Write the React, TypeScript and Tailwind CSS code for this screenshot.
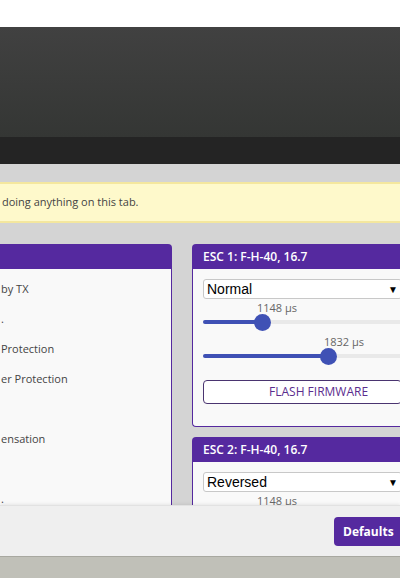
import React from "react";

const font = { fontFamily: '"Open Sans", "Liberation Sans", sans-serif' };

function Slider({ thumb, label, labelX }: { thumb: number; label: string; labelX: number }) {
  return (
    <div className="relative h-[34px]">
      <div
        className="absolute top-[0px] text-[11px] leading-[14px] text-[#666] whitespace-nowrap"
        style={{ left: labelX }}
      >
        {label}
      </div>
      <div className="absolute left-0 right-0 top-[19px] h-[4px] rounded-full bg-[#e9e9e9]" />
      <div className="absolute left-0 top-[19px] h-[4px] rounded-full bg-[#3f51b5]" style={{ width: thumb }} />
      <div
        className="absolute top-[13px] w-[17px] h-[17px] rounded-full bg-[#3f51b5]"
        style={{ left: thumb - 8 }}
      />
    </div>
  );
}

function Select({ value }: { value: string }) {
  return (
    <div
      className="h-[20px] border border-[#c8c8c8] rounded-[3px] bg-white flex items-center justify-between pl-[3px] pr-[3px] text-[14px] text-black"
      style={{ fontFamily: '"Liberation Sans", Arial, sans-serif' }}
    >
      <span>{value}</span>
      <span className="text-[10px]">▼</span>
    </div>
  );
}

export default function App() {
  const rows = ["by TX", ".", "Protection", "er Protection", "", "ensation", "", "."];
  return (
    <div className="w-[400px] h-[578px] overflow-hidden flex flex-col" style={font}>
      <div className="h-[27px] bg-white shrink-0" />
      <div className="h-[110px] shrink-0 bg-gradient-to-b from-[#414141] to-[#343634]" />
      <div className="h-[27px] shrink-0 bg-[#242424]" />
      <div className="h-[341px] shrink-0 overflow-hidden bg-[#d4d4d4] pt-[18px]">
        <div className="h-[41px] bg-[#fef9cb] border-y-2 border-[#f4e79e] flex items-center text-[11px] text-[#444] pl-[2px] whitespace-nowrap">
          doing anything on this tab.
        </div>
        <div className="flex gap-[20px] mt-[21px]">
          <div className="w-[172px] shrink-0 flex flex-col">
            <div className="h-[25px] bg-[#55299f] rounded-tr-[4px]" />
            <div className="h-[300px] bg-[#f9f9f9] border-r border-b border-[#55299f] pt-[5px] text-[11px] text-[#444]">
              {rows.map((r, i) => (
                <div key={i} className="h-[30px] flex items-center whitespace-nowrap pl-[1px]">
                  {r}
                </div>
              ))}
            </div>
          </div>
          <div className="w-[210px] shrink-0 flex flex-col gap-[10px]">
            <div className="flex flex-col">
              <div className="h-[25px] bg-[#55299f] rounded-tl-[4px] flex items-center pl-[11px] text-[12px] font-semibold text-white whitespace-nowrap">
                ESC 1: F-H-40, 16.7
              </div>
              <div className="h-[158px] bg-[#f9f9f9] border-l border-b border-[#55299f] rounded-bl-[4px] pl-[10px] pt-[10px]">
                <Select value="Normal" />
                <div className="mt-[2px]">
                  <Slider thumb={59} label="1148 μs" labelX={54} />
                </div>
                <Slider thumb={125} label="1832 μs" labelX={121} />
                <div className="mt-[11px] h-[24px] border border-[#4a3470] rounded-[4px] bg-white flex items-center text-[12px] text-[#5b2d8e] whitespace-nowrap">
                  <span className="ml-[65px]">FLASH FIRMWARE</span>
                </div>
              </div>
            </div>
            <div className="flex flex-col">
              <div className="h-[25px] bg-[#55299f] rounded-tl-[4px] flex items-center pl-[11px] text-[12px] font-semibold text-white whitespace-nowrap">
                ESC 2: F-H-40, 16.7
              </div>
              <div className="h-[158px] bg-[#f9f9f9] border-l border-b border-[#55299f] rounded-bl-[4px] pl-[10px] pt-[10px]">
                <Select value="Reversed" />
                <div className="mt-[2px]">
                  <Slider thumb={59} label="1148 μs" labelX={54} />
                </div>
              </div>
            </div>
          </div>
        </div>
      </div>
      <div className="h-[51px] shrink-0 bg-[#efefef] border-t border-[#e2e2e2] flex items-start justify-end pt-[11px] shadow-[0_-1px_3px_rgba(0,0,0,0.08)]">
        <div className="h-[29px] w-[70px] -mr-[4px] bg-[#55299f] rounded-l-[4px] flex items-center pl-[9px] text-[12px] font-bold text-white">
          Defaults
        </div>
      </div>
      <div className="flex-1 bg-[#c0c0b8] border-t border-[#a8a8a0]" />
    </div>
  );
}
